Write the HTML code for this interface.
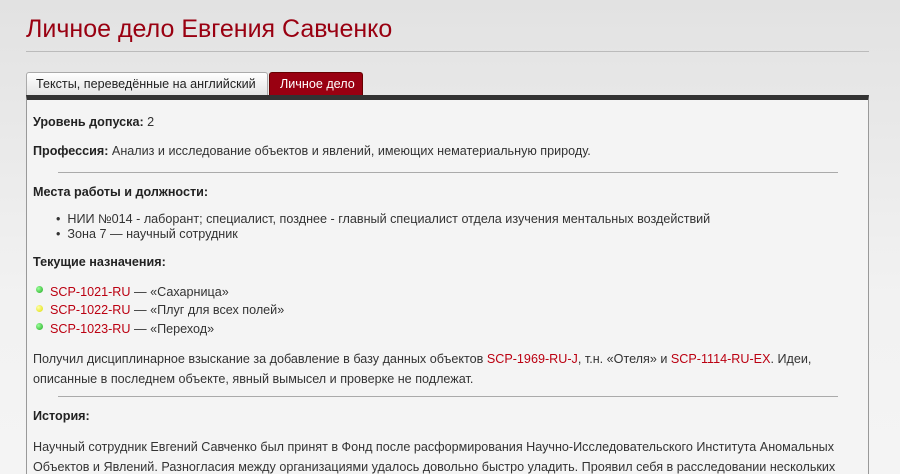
<!DOCTYPE html>
<html><head><meta charset="utf-8"><style>
*{margin:0;padding:0;box-sizing:border-box}
html,body{width:900px;height:474px;overflow:hidden}
body{background:linear-gradient(#e2e2e2,#f2f2f2 300px,#f4f4f4);font-family:"Liberation Sans","DejaVu Sans",sans-serif;font-size:12.6px;color:#333;position:relative}
.a{position:absolute;white-space:nowrap}
h1{position:absolute;left:26px;top:15px;font-weight:normal;font-size:25px;color:#901;white-space:nowrap}
.line{position:absolute;left:26px;width:843px;top:51px;height:1px;background:#bbb}
.tab{position:absolute;top:72px;height:23px;line-height:22px;padding:0 0 0 9px;font-size:12.6px;border:1px solid #aaa;border-bottom:none;border-radius:3px 3px 0 0;white-space:nowrap;overflow:hidden}
.box{position:absolute;left:26px;top:95px;width:843px;height:390px;background:#f4f4f4;border:1px solid #999;border-top:5px solid #333}
.hr{position:absolute;left:58px;width:780px;height:1px;background:#aaa}
b{color:#222}
.r{color:#b01}
.dot{position:absolute;width:7px;height:7px;border-radius:50%}
</style></head><body>
<h1>Личное дело Евгения Савченко</h1>
<div class="line"></div>
<div class="tab" style="left:26px;width:242px;background:linear-gradient(#fff,#e4e4e4);color:#222">Тексты, переведённые на английский</div>
<div class="tab" style="left:269px;width:94px;background:#901;color:#fff;border-color:#600;padding-left:10px">Личное дело</div>
<div class="box"></div>
<div class="a" style="left:33px;top:115px"><b>Уровень допуска:</b> 2</div>
<div class="a" style="left:33px;top:144px"><b>Профессия:</b> Анализ и исследование объектов и явлений, имеющих нематериальную природу.</div>
<div class="hr" style="top:172px"></div>
<div class="a" style="left:33px;top:185px"><b>Места работы и должности:</b></div>
<div class="a" style="left:56px;top:212px">•&nbsp;&nbsp;НИИ №014 - лаборант; специалист, позднее - главный специалист отдела изучения ментальных воздействий</div>
<div class="a" style="left:56px;top:227px">•&nbsp;&nbsp;Зона 7 — научный сотрудник</div>
<div class="a" style="left:33px;top:255px"><b>Текущие назначения:</b></div>
<div class="dot" style="left:36px;top:286px;background:radial-gradient(circle at 35% 35%,#9f9,#2a2)"></div>
<div class="dot" style="left:36px;top:305px;background:radial-gradient(circle at 35% 35%,#ffa,#dd0)"></div>
<div class="dot" style="left:36px;top:323px;background:radial-gradient(circle at 35% 35%,#9f9,#2a2)"></div>
<div class="a" style="left:50px;top:285px"><span class="r">SCP-1021-RU</span> — «Сахарница»</div>
<div class="a" style="left:50px;top:303px"><span class="r">SCP-1022-RU</span> — «Плуг для всех полей»</div>
<div class="a" style="left:50px;top:322px"><span class="r">SCP-1023-RU</span> — «Переход»</div>
<div class="a" style="left:33px;top:349px;line-height:20px">Получил дисциплинарное взыскание за добавление в базу данных объектов <span class="r">SCP-1969-RU-J</span>, т.н. «Отеля» и <span class="r">SCP-1114-RU-EX</span>. Идеи,<br>описанные в последнем объекте, явный вымысел и проверке не подлежат.</div>
<div class="hr" style="top:396px"></div>
<div class="a" style="left:33px;top:409px"><b>История:</b></div>
<div class="a" style="left:33px;top:437px;line-height:20px">Научный сотрудник Евгений Савченко был принят в Фонд после расформирования Научно-Исследовательского Института Аномальных<br>Объектов и Явлений. Разногласия между организациями удалось довольно быстро уладить. Проявил себя в расследовании нескольких</div>
</body></html>
